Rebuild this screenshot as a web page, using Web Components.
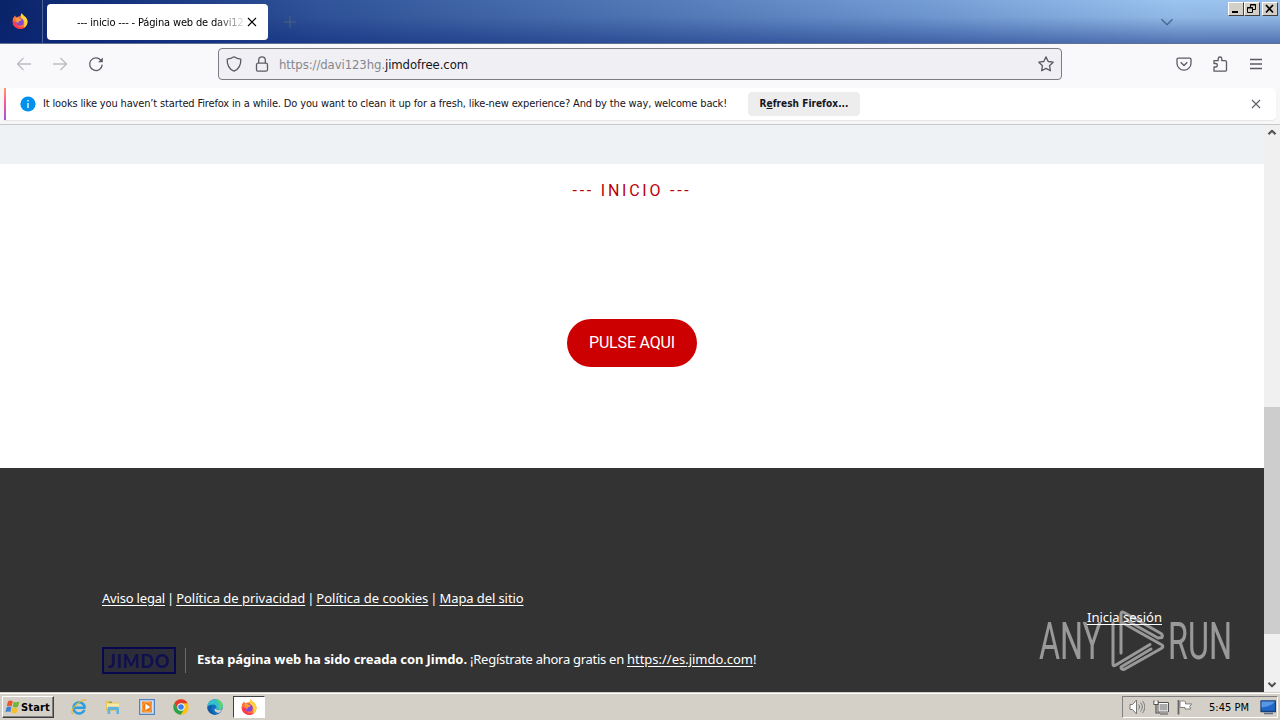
<!DOCTYPE html>
<html lang="es">
<head>
<meta charset="utf-8">
<title>--- inicio --- - Página web de davi123hg</title>
<style>
    body {
        margin: 0;
        overflow: hidden;
    }
</style>
</head>
<body>
<desktop-screen></desktop-screen>

<script>
// Base class: each component only declares its styles and its markup
class BaseElement extends HTMLElement {
    constructor() {
        super();
        this.attachShadow({ mode: 'open' });
    }

    getTemplate() {
        const template = document.createElement('template');
        template.innerHTML = `<style>${this.getStyles()}</style>${this.getMarkup()}`;
        return template;
    }

    render() {
        this.shadowRoot.replaceChildren(this.getTemplate().content.cloneNode(true));
    }

    connectedCallback() {
        this.render();
    }
}

// Spreads one line of text over a given width
class FitText extends BaseElement {
    getStyles() {
        return `
            :host {
                display: inline-block;
                white-space: nowrap;
                flex: none;
            }
        `;
    }

    getMarkup() {
        return '<slot></slot>';
    }

    connectedCallback() {
        this.render();
        const width = Number(this.getAttribute('width'));
        const count = this.textContent.length;
        const natural = this.getBoundingClientRect().width;
        this.style.letterSpacing = `${(width - natural) / count}px`;
    }
}

const ICONS = {
    back: '<path d="M15 8H1.500M7.500 2 1.500 8l6 6"/>',
    forward: '<path d="M1 8h13.500M8.500 2l6 6-6 6"/>',
    reload: '<path d="M14.200 8.600A6.300 6.300 0 1 1 12.600 4l1.600 1.600"/><path d="M14.800 1.500V6.200h-4.700z" fill="currentColor" stroke="none"/>',
    shield: '<path d="M8 .8c2.300 1.500 4.300 2.100 6.800 2.400.3 5.200-1.300 9.500-6.800 12-5.500-2.500-7.100-6.800-6.800-12C3.700 2.900 5.700 2.300 8 .8z"/>',
    lock: '<rect x="2.500" y="7.200" width="11" height="8" rx="1.500"/><path d="M4.700 7V4.200a3.300 3.300 0 0 1 6.600 0V7"/>',
    star: '<path d="M8 .9l2.200 4.600 5 .7-3.700 3.500.9 5.100L8 12.400l-4.400 2.400.9-5.100L.8 6.200l5-.7z"/>',
    pocket: '<path d="M2.300 2.200h11.400c.8 0 1.300.5 1.300 1.300v3.700a7 7 0 0 1-14 0V3.500c0-.8.5-1.300 1.300-1.300z"/><path d="M4.700 6.300 8 9.500l3.300-3.200"/>',
    puzzle: '<path d="M2 15.200V11h1.600a1.700 1.700 0 0 0 0-3.500H2V4.700h4.200V2.800a1.800 1.800 0 0 1 3.600 0v1.900h3.400c.8 0 1.300.5 1.300 1.300v7.900c0 .8-.5 1.300-1.300 1.300z"/>',
    menu: '<path d="M2 3.500h12M2 8h12M2 12.500h12"/>',
    close: '<path d="M4 4l8 8M12 4l-8 8" stroke-width="1.100"/>',
    plus: '<path d="M8 2v12M2 8h12" stroke-width="1"/>',
    chevron: '<path d="M2.500 5.200 8 10.700l5.500-5.500"/>',
    up: '<path d="M4.500 9.300 8 5.800l3.500 3.500" stroke-width="2.200"/>',
    down: '<path d="M4.500 6.800 8 10.300l3.500-3.500" stroke-width="2.200"/>',
    info: '<circle cx="8" cy="8" r="7.600" fill="#0090ed" stroke="none"/><path d="M8 7v5M8 4v1.500" stroke="#fff" stroke-width="1.300"/>',
    firefox: `
        <g stroke="none">
            <path d="M1 5.200 3 2.500l1.300 2 2-1 2.400-.2L9.500.3l2.300 2.500c2.200 1.300 3.700 3.700 3.700 6.100A7.200 7.200 0 0 1 8 15.900 7.300 7.300 0 0 1 .6 8.800z" fill="#ff7139"/>
            <path d="M9.500.3l2.300 2.500c2.400 1.500 3.900 4 3.700 6.400-.3 2.700-2 4.800-4.200 5.900 1.800-3.600 1.500-7.300-1.800-9.500C8.400 4.500 8.400 2 9.500.3z" fill="#ffd43a"/>
            <path d="M.8 8c0 4.500 3.300 7.900 7.400 7.900 2.300 0 4.100-.9 5.200-2.100-4 1.300-8.700.4-9.300-4.800z" fill="#ff3750"/>
            <circle cx="7.900" cy="8.900" r="3.700" fill="#8448d8"/>
            <path d="M3.700 5.100c1.600-.7 3-.5 4.100.6l2 .8c-.6 1.200-1.700 1.500-2.800 1.700-.7.500-1 1.300-.3 2.200-2.300-.6-3.500-2.700-3-5.300z" fill="#ff9a3c"/>
        </g>`,
    ie: `
        <path d="M13.400 10.800A5.600 5.600 0 1 1 13.700 8.700H3" stroke="#2c9ee0" stroke-width="2.500"/>
        <path d="M15.200 1.300C12.500-.3 5.300 4 2.200 9.200c-1.800 3-2 5.700.3 5.500" stroke="#e5b62d" stroke-width="1.200"/>`,
    explorer: `
        <g stroke="none">
            <path d="M1 2h5l1 1.500h7V12H1z" fill="#e6c35c"/>
            <path d="M2 4.500h12v6H2z" fill="#f8e9a4"/>
            <path d="M4 2.800h3v1H4z" fill="#52a952"/>
            <path d="M2.500 15V9.300c0-1 .5-1.500 1.500-1.500h8.500c1 0 1.500.5 1.500 1.500V15h-2.600v-4H5.200v4z" fill="#63b4dc"/>
        </g>`,
    player: `
        <rect x=".6" y=".6" width="14.800" height="14.800" fill="#cfe3f6" stroke="#5483bd"/>
        <rect x="3" y="2.500" width="10" height="11" fill="#f5871f" stroke="none"/>
        <circle cx="8" cy="8" r="4.700" fill="#f07a14" stroke="#ffc37a" stroke-width=".6"/>
        <path d="M6.400 4.700v6.600L11.300 8z" fill="#fff" stroke="none"/>`,
    chrome: `
        <g stroke="none">
            <circle cx="8" cy="8" r="7.700" fill="#fbc116"/>
            <path d="M1.300 4.200A7.700 7.700 0 0 1 14.700 4.200L8 4.500 4.700 10z" fill="#e33b2e"/>
            <path d="M1.300 4.200A7.700 7.700 0 0 0 7.700 15.700L11.200 9.900 8 11.500 4.700 10z" fill="#2ba24c"/>
            <circle cx="8" cy="8" r="3.700" fill="#fff"/>
            <circle cx="8" cy="8" r="2.800" fill="#3b7ded"/>
        </g>`,
    edge: `
        <g stroke="none">
            <circle cx="8" cy="8" r="7.700" fill="#1272c4"/>
            <path d="M.4 7.200C1 3 4.300.3 8.200.3c4.500 0 7.500 3.200 7.500 6.500 0 2.500-2 4-4.200 4-1.700 0-2.500-.7-2.200-1.300C10 8 9 5.600 6 5.600 3 5.600.9 6.600.4 8z" fill="#35c1c8"/>
            <path d="M8.200.3c4.500 0 7.500 3.200 7.500 6.500 0 2.500-2 4-4.200 4 2.200-3.800.3-8.500-3.300-10.500z" fill="#5ed36b"/>
            <path d="M9.300 9.500c-.4 1 .7 1.700 2.200 1.700 1.500 0 2.700-.5 3.700-1.200-.6 1.700-1.700 3-2.800 3.800-2.600.5-5.200-1.100-4.900-3.800z" fill="#d4d0c8"/>
            <path d="M5.300 7c-2 3.500 0 7.700 4.500 8.500C4.800 16.400.5 13 .3 8.500 1.500 6.500 3.700 6 5.300 7z" fill="#155ba8"/>
        </g>`,
    windows: `
        <g stroke="none">
            <path d="M3 2.200c1.800-1 3.300-.9 4.800 0L6.700 7.300c-1.600-.8-3-.8-4.900 0z" fill="#e9572a"/>
            <path d="M8.700 2.700c1.800.9 3.600.9 5.700-.1l-1.300 5.100c-1.900.9-3.700.9-5.500.1z" fill="#72b43d"/>
            <path d="M1.600 8.200c1.800-.9 3.400-.9 4.900 0l-1.200 4.900c-1.500-.8-3-.8-4.900.1z" fill="#3c83d1"/>
            <path d="M7.400 8.600c1.800.9 3.600.9 5.500.1l-1.200 5c-1.800 1-3.600.9-5.500-.1z" fill="#f5bf2b"/>
        </g>`,
    speaker: '<path d="M1 5.500h2.500L7.500 1v14l-4-4.500H1z" fill="#fff" stroke="#777" stroke-width="1"/><path d="M9.500 5.500c1.300 1.500 1.300 3.500 0 5M11.500 3.500c2.300 2.500 2.300 6.500 0 9M13.500 2c3 3.500 3 8.500 0 12" stroke="#777" stroke-width="1"/>',
    network: '<rect x="5.500" y="4" width="10" height="8.500" fill="#aaa" stroke="#fff" stroke-width="2"/><rect x="5" y="3.500" width="10.500" height="9.500" stroke="#555" stroke-width="1"/><path d="M7 15h8M1 1.500v4h4v-4M3 5.500V14h4" stroke="#555" stroke-width="1.200"/><path d="M1.500 2.500h3v2.500h-3z" fill="#fff" stroke="none"/>',
    flag: '<path d="M1.500 1v14.500" stroke="#666" stroke-width="1.800"/><path d="M3 2.500c2-1 4-.8 5.500.4v2h6.200l-2 2.600 1 2.500H8V8.500H3z" fill="#fff" stroke="#777" stroke-width=".9"/>',
    monitor: '<path d="M1 2h14.500v10.500H1z" fill="#1f68c7" stroke="#173e79"/><path d="M1.500 2.500h13.500c-3 4-8 5.500-13.500 6z" fill="#5797e4" stroke="none"/><path d="M4 14.500h9" stroke="#5b6d84" stroke-width="1.500"/>'
};

class UiIcon extends BaseElement {
    getStyles() {
        return `
            :host {
                display: block;
                flex: none;
                width: 16px;
                height: 16px;
            }

            svg {
                display: block;
                width: 100%;
                height: 100%;
            }
        `;
    }

    getMarkup() {
        return `
            <svg viewBox="0 0 16 16" fill="none" stroke="currentColor" stroke-width="1.300" stroke-linejoin="round">
                ${ICONS[this.getAttribute('name')]}
            </svg>
        `;
    }
}

class TabStrip extends BaseElement {
    getStyles() {
        return `
            :host {
                display: flex;
                position: relative;
                box-sizing: border-box;
                height: 44px;
                border-bottom: 1px solid #5f7090;
                background:
                    linear-gradient(rgba(0, 0, 0, 0), rgba(10, 36, 106, .08) 40%, rgba(10, 36, 120, .5)),
                    linear-gradient(90deg, #0a246a 0, #12307a 8%, #31549a 25%, #5379b6 50%, #749dd5 72%, #9cc4ef 92%, #9bc2ed 100%);
            }

            .view {
                box-sizing: border-box;
                width: 43px;
                padding: 13px 0 0 12px;
                border-right: 1px solid #506198;
            }

            .tab {
                display: flex;
                align-items: center;
                box-sizing: border-box;
                width: 221px;
                height: 36px;
                margin: 4px 0 0 4px;
                padding-left: 30px;
                border-radius: 4px;
                background: #fff;
            }

            .title {
                width: 168px;
                padding-top: 1px;
                overflow: hidden;
                -webkit-mask-image: linear-gradient(90deg, #000 82%, transparent 101%);
                mask-image: linear-gradient(90deg, #000 82%, transparent 101%);
            }

            .add {
                margin: 14px 0 0 14px;
                color: #4e6077;
            }

            .all-tabs {
                margin: 14px 105px 0 auto;
                color: #47678f;
            }

            .controls {
                display: flex;
                position: absolute;
                top: 2px;
                right: 2px;
            }

            .controls svg {
                display: block;
                box-sizing: border-box;
                width: 16px;
                height: 14px;
                border: 1px solid;
                border-color: #fff #404040 #404040 #fff;
                background: #d4d0c8;
                fill: none;
                stroke: #000;
            }

            .controls svg:last-child {
                margin-left: 2px;
            }
        `;
    }

    getMarkup() {
        return `
            <div class="view"><ui-icon name="firefox"></ui-icon></div>
            <div class="tab">
                <div class="title"><fit-text width="185">--- inicio --- - Página web de davi123hg</fit-text></div>
                <ui-icon name="close" style="margin-left: -1px"></ui-icon>
            </div>
            <ui-icon class="add" name="plus"></ui-icon>
            <ui-icon class="all-tabs" name="chevron"></ui-icon>
            <div class="controls">
                <svg viewBox="0 0 14 12"><path d="M3 9h6" stroke-width="2"/></svg>
                <svg viewBox="0 0 14 12"><path d="M5.500 4V1.500h5v5H8M5 2h6M2.500 4.500h5v5h-5zM2 5h6"/></svg>
                <svg viewBox="0 0 14 12"><path d="M3 2l7 7.500M10 2L3 9.500" stroke-width="1.700"/></svg>
            </div>
        `;
    }
}

class NavBar extends BaseElement {
    getStyles() {
        return `
            :host {
                display: flex;
                align-items: center;
                box-sizing: border-box;
                height: 44px;
                padding: 0 16px 4px;
                background: #f9f9fb;
                color: #5b5b66;
            }

            .off {
                color: #bcbcc3;
            }

            .buttons, .tools {
                display: flex;
                gap: 20px;
            }

            .buttons {
                width: 202px;
            }

            .url {
                display: flex;
                align-items: center;
                box-sizing: border-box;
                width: 844px;
                height: 32px;
                padding: 0 7px;
                border: 1px solid #7c7c83;
                border-radius: 4px;
                background: #f0f0f4;
                color: #85858d;
                font-size: 13px;
            }

            .url ui-icon {
                color: #5b5b66;
            }

            b {
                color: #15141a;
                font-weight: 400;
            }

            .tools {
                margin-left: auto;
            }
        `;
    }

    getMarkup() {
        return `
            <div class="buttons">
                <ui-icon class="off" name="back"></ui-icon>
                <ui-icon class="off" name="forward"></ui-icon>
                <ui-icon name="reload"></ui-icon>
            </div>
            <div class="url">
                <ui-icon name="shield"></ui-icon>
                <ui-icon name="lock" style="margin: 0 9px 0 12px"></ui-icon>
                <fit-text width="106">https://davi123hg.</fit-text>
                <b><fit-text width="83">jimdofree.com</fit-text></b>
                <ui-icon name="star" style="margin-left: auto"></ui-icon>
            </div>
            <div class="tools">
                <ui-icon name="pocket"></ui-icon>
                <ui-icon name="puzzle"></ui-icon>
                <ui-icon name="menu"></ui-icon>
            </div>
        `;
    }
}

class NotificationBar extends BaseElement {
    getStyles() {
        return `
            :host {
                display: block;
                box-sizing: border-box;
                height: 37px;
                padding: 0 4px;
                border-bottom: 1px solid #c8c8cb;
                background: #f7f7f8;
            }

            .bar {
                display: flex;
                align-items: center;
                box-sizing: border-box;
                height: 32px;
                padding: 0 12px 0 14px;
                border-radius: 0 4px 4px 0;
                background: linear-gradient(#ff9a6c, #ff4f9b 50%, #9259e8) 0 0 / 2px 100% no-repeat #fff;
                box-shadow: 0 1px 1px #e6e6e8;
                color: #15141a;
            }

            .message {
                width: 705px;
                margin-left: 7px;
                padding-bottom: 2px;
            }

            .button {
                width: 112px;
                height: 24px;
                border-radius: 4px;
                background: #ededee;
                font-weight: 700;
                font-size: 10px;
                line-height: 24px;
                text-align: center;
            }

            .close {
                margin-left: auto;
                color: #5b5b66;
            }
        `;
    }

    getMarkup() {
        return `
            <div class="bar">
                <ui-icon name="info" style="margin-left: 2px"></ui-icon>
                <div class="message"><fit-text width="684">${this.textContent.trim()}</fit-text></div>
                <div class="button"><fit-text width="89">R<u>e</u>fresh Firefox...</fit-text></div>
                <ui-icon class="close" name="close"></ui-icon>
            </div>
        `;
    }
}

class SitePage extends BaseElement {
    getStyles() {
        return `
            :host {
                display: flex;
                flex-direction: column;
                flex: 1;
                font-family: "Noto Sans", sans-serif;
            }

            .band {
                height: 39px;
                background: #eef2f5;
            }

            main {
                display: flex;
                flex-direction: column;
                align-items: center;
                height: 304px;
                background: #fff;
            }

            h1 {
                margin: 16px 0 0;
                color: #b8000b;
                font: 400 16px/22px Roboto, sans-serif;
            }

            .cta {
                width: 130px;
                height: 48px;
                margin-top: 117px;
                border-radius: 24px;
                background: #c00;
                color: #fff;
                font: 16px/48px Roboto, sans-serif;
                text-align: center;
            }

            footer {
                display: flex;
                flex: 1;
                justify-content: space-between;
                padding: 121px 102px 0;
                background: #333;
                color: #fff;
                font-size: 13px;
                line-height: 18px;
            }

            .links, .credit {
                display: flex;
                align-items: center;
            }

            .links {
                gap: 2px;
            }

            .credit {
                margin-top: 40px;
            }

            .logo {
                box-sizing: border-box;
                width: 74px;
                height: 27px;
                border: 2px solid #08084e;
                background: #2d2d3a;
                color: #10104f;
                font: 900 18px/24px Lato, sans-serif;
                text-align: center;
            }

            .text {
                height: 25px;
                margin-left: 9px;
                padding-left: 11px;
                border-left: 1px solid #6b6b6b;
                line-height: 23px;
                white-space: nowrap;
            }

            /* underlines do not reach into inline blocks by themselves */
            u fit-text {
                text-decoration: underline;
                text-underline-offset: 2px;
            }

            .login {
                margin-top: 19px;
            }
        `;
    }

    getMarkup() {
        return `
            <div class="band"></div>
            <main>
                <h1><fit-text width="119">--- INICIO ---</fit-text></h1>
                <div class="cta"><fit-text width="86">PULSE AQUI</fit-text></div>
            </main>
            <footer>
                <div>
                    <div class="links">
                        <u><fit-text width="63">Aviso legal</fit-text></u>|
                        <u><fit-text width="129">Política de privacidad</fit-text></u>|
                        <u><fit-text width="112">Política de cookies</fit-text></u>|
                        <u><fit-text width="84">Mapa del sitio</fit-text></u>
                    </div>
                    <div class="credit">
                        <div class="logo"><fit-text width="62">JIMDO</fit-text></div>
                        <div class="text"><b><fit-text width="270">Esta página web ha sido creada con Jimdo.</fit-text></b><fit-text width="160" style="white-space: pre"> ¡Regístrate ahora gratis en </fit-text><u><fit-text width="126">https://es.jimdo.com</fit-text></u>!</div>
                    </div>
                </div>
                <div class="login"><u><fit-text width="75">Inicia sesión</fit-text></u></div>
            </footer>
        `;
    }
}

class ScrollBar extends BaseElement {
    getStyles() {
        return `
            :host {
                display: flex;
                flex-direction: column;
                width: 16px;
                background: #f0f0f0;
                color: #555;
            }

            .thumb {
                height: 227px;
                margin: 266px 0 auto;
                background: #cdcdcd;
            }
        `;
    }

    getMarkup() {
        return `
            <ui-icon name="up"></ui-icon>
            <div class="thumb"></div>
            <ui-icon name="down"></ui-icon>
        `;
    }
}

class WaterMark extends BaseElement {
    getStyles() {
        return `
            :host {
                display: block;
                position: absolute;
                left: 1036px;
                top: 606px;
                width: 200px;
                height: 70px;
                opacity: .5;
            }

            svg {
                overflow: visible;
            }

            text {
                fill: #fff;
                font: 400 52px Roboto, sans-serif;
            }
        `;
    }

    getMarkup() {
        return `
            <svg width="200" height="70" fill="none" stroke="#fff" stroke-width="3" stroke-linecap="round" stroke-linejoin="round">
                <text x="3" y="53" textLength="63" lengthAdjust="spacingAndGlyphs" stroke="none">ANY</text>
                <text x="132" y="53" textLength="64" lengthAdjust="spacingAndGlyphs" stroke="none">RUN</text>
                <path d="M85 47V8q0-3 3-1.500l37 21q2 1.500 1 4l-4 .5-31-17.500M77 17v41q0 2.500 2 1.500l35-21M85 17h2l39 22q1.500 1.500 0 3L88 63.500q-3 0-3-2.500l30-18"/>
            </svg>
        `;
    }
}

class TaskBar extends BaseElement {
    getStyles() {
        return `
            :host {
                display: flex;
                align-items: center;
                box-sizing: border-box;
                height: 28px;
                padding: 1px 2px 0;
                border-top: 1px solid #d4d0c8;
                background: #d4d0c8;
                box-shadow: inset 0 1px #fff;
            }

            .start {
                display: flex;
                align-items: center;
                box-sizing: border-box;
                width: 52px;
                height: 22px;
                padding-left: 2px;
                border: 1px solid;
                border-color: #fff #404040 #404040 #fff;
                box-shadow: inset -1px -1px #808080;
                font-weight: 700;
            }

            .apps {
                display: flex;
                gap: 18px;
                margin-left: 17px;
            }

            .active {
                display: flex;
                align-items: center;
                justify-content: center;
                box-sizing: border-box;
                width: 32px;
                height: 22px;
                margin-left: 10px;
                border: 1px solid;
                border-color: #404040 #fff #fff #404040;
                background: #fff;
            }

            .tray {
                display: flex;
                align-items: center;
                box-sizing: border-box;
                width: 156px;
                height: 22px;
                margin-left: auto;
                padding: 0 2px 0 6px;
                border: 1px solid;
                border-color: #808080 #fff #fff #808080;
            }

            .tray ui-icon + ui-icon {
                margin-left: 8px;
            }

            .clock {
                margin: 0 11px 0 16px;
            }
        `;
    }

    getMarkup() {
        return `
            <div class="start"><ui-icon name="windows"></ui-icon><fit-text width="29">Start</fit-text></div>
            <div class="apps">
                <ui-icon name="ie"></ui-icon>
                <ui-icon name="explorer"></ui-icon>
                <ui-icon name="player"></ui-icon>
                <ui-icon name="chrome"></ui-icon>
                <ui-icon name="edge"></ui-icon>
            </div>
            <div class="active"><ui-icon name="firefox"></ui-icon></div>
            <div class="tray">
                <ui-icon name="speaker"></ui-icon>
                <ui-icon name="network"></ui-icon>
                <ui-icon name="flag"></ui-icon>
                <div class="clock"><fit-text width="40">5:45 PM</fit-text></div>
                <ui-icon name="monitor"></ui-icon>
            </div>
        `;
    }
}

class DesktopScreen extends BaseElement {
    getStyles() {
        return `
            :host {
                display: flex;
                flex-direction: column;
                position: relative;
                width: 1280px;
                height: 720px;
                overflow: hidden;
                background: #fff;
                color: #000;
                font: 11px "DejaVu Sans Condensed", "DejaVu Sans", sans-serif;
                font-stretch: condensed;
            }

            .content {
                display: flex;
                flex: 1;
                min-height: 0;
            }
        `;
    }

    getMarkup() {
        return `
            <tab-strip></tab-strip>
            <nav-bar></nav-bar>
            <notification-bar>It looks like you haven’t started Firefox in a while. Do you want to clean it up for a fresh, like-new experience? And by the way, welcome back!</notification-bar>
            <div class="content">
                <site-page></site-page>
                <scroll-bar></scroll-bar>
            </div>
            <task-bar></task-bar>
            <water-mark></water-mark>
        `;
    }
}

customElements.define('fit-text', FitText);
customElements.define('ui-icon', UiIcon);
customElements.define('tab-strip', TabStrip);
customElements.define('nav-bar', NavBar);
customElements.define('notification-bar', NotificationBar);
customElements.define('site-page', SitePage);
customElements.define('scroll-bar', ScrollBar);
customElements.define('water-mark', WaterMark);
customElements.define('task-bar', TaskBar);
customElements.define('desktop-screen', DesktopScreen);
</script>
</body>
</html>
